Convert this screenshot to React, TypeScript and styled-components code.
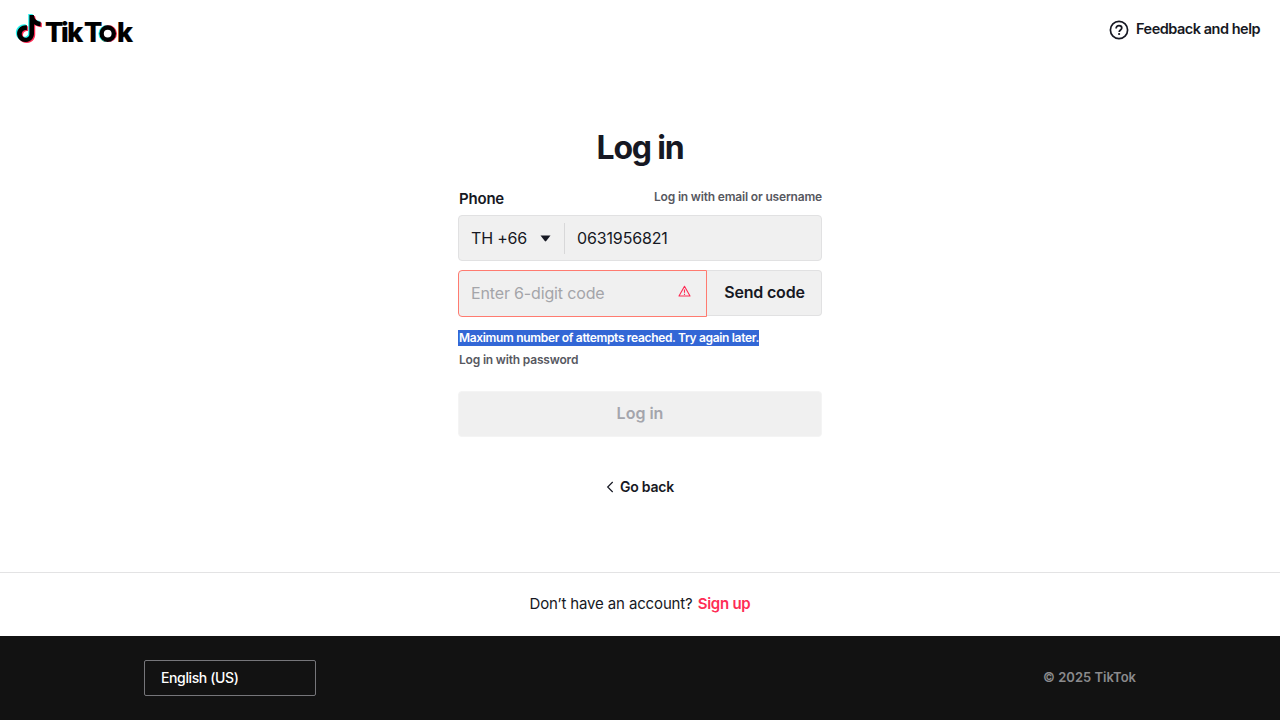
import React from 'react';
import styled, { createGlobalStyle } from 'styled-components';

const Global = createGlobalStyle`
  *, *::before, *::after { box-sizing: border-box; }
  body { margin: 0; background: #fff; color: #161823; font-family: Inter, "Liberation Sans", sans-serif; }
  button, input { font: inherit; color: inherit; margin: 0; }
`;

const Page = styled.div`
  height: 720px;
  display: flex;
  flex-direction: column;
  overflow: hidden;
`;

const Header = styled.header`
  height: 60px;
  padding: 0 20px 0 15px;
  display: flex;
  justify-content: space-between;
  align-items: center;
`;

const Text = styled.span<{ $size: number; $weight?: number; $spacing?: number; $color?: string }>`
  font-size: ${p => p.$size}px;
  font-weight: ${p => p.$weight ?? 600};
  letter-spacing: ${p => p.$spacing ?? 0}px;
  color: ${p => p.$color ?? '#161823'};
  line-height: 20px;
  white-space: nowrap;
`;

const Help = styled.a`
  display: flex;
  align-items: center;
  gap: 7px;
`;

const HelpText = styled(Text)`
  padding-bottom: 2px;
`;

const Main = styled.main`
  height: 512px;
  display: flex;
  flex-direction: column;
  align-items: center;
`;

const Title = styled.h1`
  margin: 68px 0 0;
  font-size: 32px;
  line-height: 40px;
  font-weight: 700;
  letter-spacing: -1.2px;
`;

const Form = styled.form`
  width: 364px;
  margin-top: 19px;
  display: flex;
  flex-direction: column;
`;

const LabelRow = styled.div`
  height: 28px;
  display: flex;
  justify-content: space-between;
  padding-left: 1px;
  align-items: flex-start;
`;

const LabelText = styled(Text)`
  padding-top: 2px;
`;

const PhoneField = styled.div`
  height: 46px;
  background: #f0f0f0;
  border: 1px solid #e1e1e2;
  border-radius: 4px;
  display: flex;
  align-items: center;
  padding-left: 12px;
`;

const Country = styled.div`
  width: 94px;
  height: 31px;
  border-right: 1px solid #d8d8d9;
  display: flex;
  align-items: center;
  gap: 13px;
  margin-right: 12px;
`;

const CodeRow = styled.div`
  display: flex;
  align-items: flex-start;
  margin-top: 9px;
  height: 47px;
`;

const CodeField = styled.div`
  width: 249px;
  height: 47px;
  background: #f0f0f0;
  border: 1px solid #ff7b70;
  border-radius: 4px 0 0 4px;
  display: flex;
  justify-content: space-between;
  padding: 12px 15px 0 12px;
`;

const SendButton = styled.button`
  width: 115px;
  height: 46px;
  padding: 0 0 2px 1px;
  background: #f0f0f0;
  border: 1px solid #e1e1e2;
  border-left: 0;
  border-radius: 0 4px 4px 0;
`;

const ErrorLine = styled.div`
  margin-top: 13px;
  height: 16px;
  display: flex;
`;

const Selected = styled(Text)`
  background: #3367d6;
  height: 16px;
  line-height: 16px;
  padding-left: 1px;
`;

const PasswordLink = styled(Text)`
  margin: 4px 0 0 1px;
`;

const SubmitButton = styled.button`
  margin-top: 21px;
  height: 46px;
  border: 1px solid #f4f4f4;
  border-radius: 4px;
  background: #f0f0f0;
  padding: 0 0 2px;
`;

const Back = styled.a`
  margin-top: 40px;
  display: flex;
  align-items: center;
  gap: 6px;
`;

const SignUpBar = styled.div`
  height: 64px;
  padding-bottom: 2px;
  border-top: 1px solid #e3e3e4;
  display: flex;
  justify-content: center;
  align-items: center;
  gap: 5px;
`;

const Footer = styled.footer`
  height: 84px;
  padding: 0 144px;
  background: #121212;
  display: flex;
  align-items: center;
  justify-content: space-between;
`;

const Copyright = styled(Text)`
  padding-bottom: 2px;
`;

const Language = styled.div`
  width: 172px;
  height: 36px;
  border: 1px solid #76767a;
  border-radius: 2px;
  padding-left: 16px;
  display: flex;
  align-items: center;
`;

const NOTE =
  'M12.525.02c1.31-.02 2.61-.01 3.91-.02.08 1.53.63 3.09 1.75 4.17 1.12 1.11 2.7 1.62 4.24 1.79v4.03c-1.44-.05-2.89-.35-4.2-.97-.57-.26-1.1-.59-1.62-.93-.01 2.92.01 5.84-.02 8.75-.08 1.4-.54 2.79-1.35 3.94-1.31 1.92-3.58 3.17-5.91 3.21-1.43.08-2.86-.31-4.08-1.03-2.02-1.19-3.44-3.37-3.65-5.71-.02-.5-.03-1-.01-1.49.18-1.9 1.12-3.72 2.58-4.96 1.66-1.44 3.98-2.13 6.15-1.72.02 1.48-.04 2.96-.04 4.44-.99-.32-2.15-.23-3.02.37-.63.41-1.11 1.04-1.36 1.75-.21.51-.15 1.07-.14 1.61.24 1.64 1.82 3.02 3.5 2.87 1.12-.01 2.19-.66 2.77-1.61.19-.33.4-.67.41-1.06.1-1.79.06-3.57.07-5.36.01-4.03-.01-8.05.02-12.07z';

const Logo = () => (
  <svg width="124" height="36" viewBox="0 0 124 36" role="img" aria-label="TikTok">
    <g transform="translate(-0.9 2) scale(1.13)"><path d={NOTE} fill="#25f4ee" /></g>
    <g transform="translate(1.5 4) scale(1.13)"><path d={NOTE} fill="#fe2c55" /></g>
    <g transform="translate(0.3 3) scale(1.13)"><path d={NOTE} /></g>
    <text
      x="30.1 46 52.2 68.9 84.2 102"
      y="29.8"
      fontFamily="Inter, sans-serif"
      fontWeight="800"
      fontSize="27"
      stroke="#000"
      strokeWidth="0.2"
    >
      TikTok
    </text>
    <circle cx="91.7" cy="21.6" r="6.1" fill="none" stroke="#25f4ee" strokeWidth="4.4" />
    <circle cx="93.7" cy="21.6" r="6.1" fill="none" stroke="#fe2c55" strokeWidth="4.4" />
    <circle cx="92.7" cy="21.6" r="6.1" fill="#fff" stroke="#000" strokeWidth="4.4" />
  </svg>
);

const HelpIcon = () => (
  <svg width="20" height="20" viewBox="0 0 20 20" fill="none" stroke="#161823" strokeWidth="1.7">
    <circle cx="10" cy="10" r="8.6" />
    <path d="M7.1 8.4C7.1 6.7 8.3 5.7 10 5.7s2.8 1 2.8 2.4c0 1.8-2.6 2-2.6 3.9" />
    <circle cx="10.1" cy="14" r="1.1" fill="#161823" stroke="none" />
  </svg>
);

const Warning = styled.svg`
  margin-top: 2px;
`;

const WarningIcon = () => (
  <Warning width="13" height="13" viewBox="0 0 13 13" fill="none" stroke="#fe2c55" strokeWidth="1.1" strokeLinejoin="round">
    <path d="M6.5 1.3 12 11H1z" />
    <path d="M6.5 4.6v3.2M6.5 8.8V10" />
  </Warning>
);

export default function App() {
  return (
    <Page>
      <Global />
      <Header>
        <Logo />
        <Help>
          <HelpIcon />
          <HelpText $size={14.5} $spacing={-0.49}>Feedback and help</HelpText>
        </Help>
      </Header>
      <Main>
        <Title>Log in</Title>
        <Form onSubmit={e => e.preventDefault()}>
          <LabelRow>
            <LabelText $size={15} $spacing={-0.2}>Phone</LabelText>
            <Text $size={12} $spacing={-0.18} $color="#57585f">Log in with email or username</Text>
          </LabelRow>
          <PhoneField>
            <Country>
              <Text $size={16} $weight={400} $spacing={-0.18}>TH +66</Text>
              <svg width="11" height="7" viewBox="0 0 11 7"><path d="M.5.5h10L6.2 6q-.7.8-1.4 0z" fill="#161823" /></svg>
            </Country>
            <Text $size={16} $weight={400} $spacing={-0.14}>0631956821</Text>
          </PhoneField>
          <CodeRow>
            <CodeField>
              <Text $size={16} $weight={400} $spacing={-0.15} $color="#a4a5a9">Enter 6-digit code</Text>
              <WarningIcon />
            </CodeField>
            <SendButton type="button"><Text $size={16} $spacing={-0.2}>Send code</Text></SendButton>
          </CodeRow>
          <ErrorLine>
            <Selected $size={12} $spacing={-0.33} $color="#fff">Maximum number of attempts reached. Try again later.</Selected>
          </ErrorLine>
          <PasswordLink $size={12} $spacing={-0.18} $color="#57585f">Log in with password</PasswordLink>
          <SubmitButton type="submit"><Text $size={16} $color="#a4a5ac">Log in</Text></SubmitButton>
        </Form>
        <Back>
          <svg width="8" height="12" viewBox="0 0 8 12" fill="none" stroke="#161823" strokeWidth="1.2"><path d="M6.7 1 1.7 6l5 5" /></svg>
          <Text $size={14} $spacing={-0.2}>Go back</Text>
        </Back>
      </Main>
      <SignUpBar>
        <Text $size={15} $weight={400} $spacing={-0.14}>Don’t have an account?</Text>
        <Text $size={15} $spacing={-0.25} $color="#fe2c55">Sign up</Text>
      </SignUpBar>
      <Footer>
        <Language><Text $size={14} $weight={500} $spacing={-0.38} $color="#fff">English (US)</Text></Language>
        <Copyright $size={13} $color="#8a8a8c">© 2025 TikTok</Copyright>
      </Footer>
    </Page>
  );
}
